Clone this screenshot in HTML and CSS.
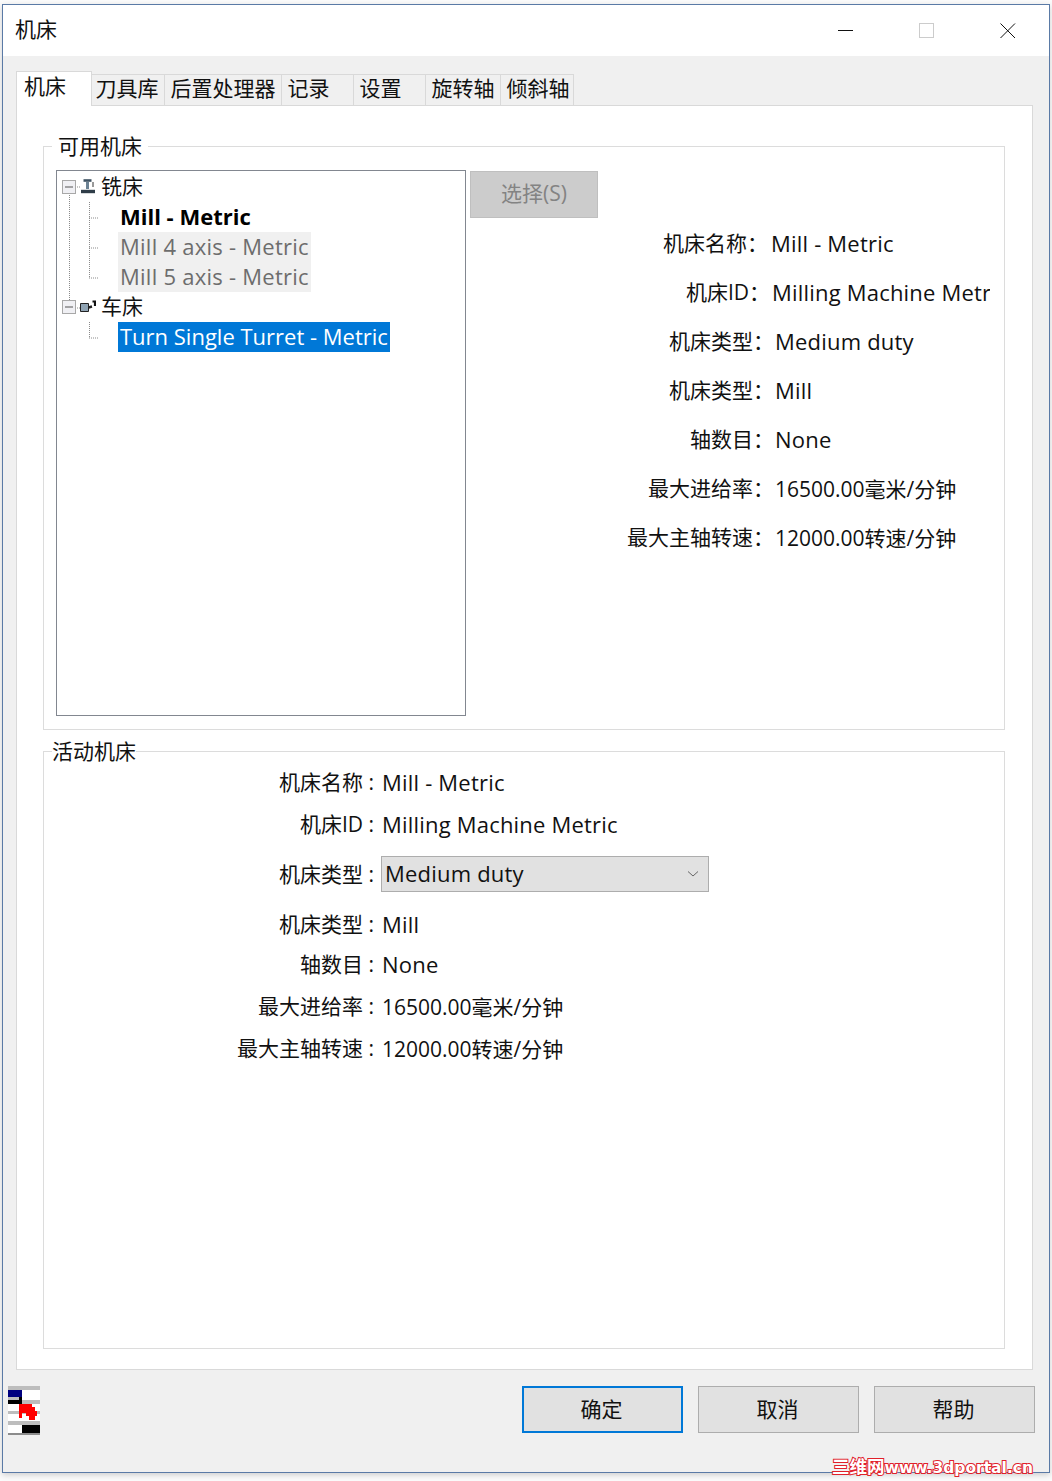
FILE: index.html
```html
<!DOCTYPE html>
<html lang="zh-CN">
<head>
<meta charset="utf-8">
<title>机床</title>
<link rel="stylesheet" href="styles.css">
</head>
<body>
<div class="window">
  <header class="titlebar">
    <span class="title">机床</span>
    <div class="caption">
      <svg class="cap-icon" width="16" height="16" viewBox="0 0 16 16"><path d="M0 7.5H15" stroke="#111" fill="none"/></svg>
      <svg class="cap-icon" width="16" height="16" viewBox="0 0 16 16"><rect x="0.5" y="0.5" width="14" height="14" stroke="#ccc" fill="none"/></svg>
      <svg class="cap-icon" width="16" height="16" viewBox="0 0 16 16"><path d="M0.5 0.5L15 15M15 0.5L0.5 15" stroke="#111" fill="none"/></svg>
    </div>
  </header>
  <div class="client">
    <nav class="tabs">
      <span class="tab tab-active w76">机床</span>
      <span class="tab tab-tight w73">刀具库</span>
      <span class="tab w117">后置处理器</span>
      <span class="tab w72">记录</span>
      <span class="tab w72">设置</span>
      <span class="tab w75">旋转轴</span>
      <span class="tab w73">倾斜轴</span>
    </nav>
    <main class="panel">
      <section class="group group-available">
        <h2 class="legend legend-available">可用机床</h2>
        <div class="tree">
          <svg class="tree-lines" width="120" height="180" viewBox="0 0 120 180">
            <g stroke="#8a8a8a" stroke-dasharray="1 1" fill="none">
              <path d="M12.5 24V129"/>
              <path d="M32.5 31V107M32 47H42M32 77H42M32 107H42"/>
              <path d="M32.5 151V167M32 167H42"/>
              <path d="M18 16H23M18 137H23"/>
            </g>
          </svg>
          <div class="tree-row">
            <svg class="expander" width="15" height="15" viewBox="0 0 15 15"><rect x="0.5" y="0.5" width="13" height="13" fill="#f0f0f4" stroke="#a8a8a8"/><path d="M3 7H11" stroke="#555"/></svg>
            <svg class="node-icon" width="16" height="16" viewBox="0 0 16 16"><path d="M3.5 1.5H11.5" stroke="#3f5363" stroke-width="2.6" fill="none"/><path d="M7.5 3V10" stroke="#6b8294" stroke-width="3" fill="none"/><path d="M13 3V8" stroke="#333" fill="none"/><path d="M1 12.5H15" stroke="#2f3d48" stroke-width="3.4"/></svg>
            <span class="node-label">铣床</span>
          </div>
          <div class="tree-row tree-leaf"><span class="leaf leaf-active">Mill - Metric</span></div>
          <div class="tree-row tree-leaf"><span class="leaf leaf-disabled">Mill 4 axis - Metric</span></div>
          <div class="tree-row tree-leaf"><span class="leaf leaf-disabled">Mill 5 axis - Metric</span></div>
          <div class="tree-row">
            <svg class="expander" width="15" height="15" viewBox="0 0 15 15"><rect x="0.5" y="0.5" width="13" height="13" fill="#f0f0f4" stroke="#a8a8a8"/><path d="M3 7H11" stroke="#555"/></svg>
            <svg class="node-icon" width="16" height="16" viewBox="0 0 16 16"><path d="M0.5 4.5H8.5V12.5H0.5Z" fill="#8fa3b3" stroke="#222"/><path d="M8.5 8.5L12 7.5" stroke="#222" stroke-width="2.4"/><path d="M12.5 2.5H15V7" stroke="#111" stroke-width="2.2" fill="none"/></svg>
            <span class="node-label">车床</span>
          </div>
          <div class="tree-row tree-leaf"><span class="leaf leaf-selected">Turn Single Turret - Metric</span></div>
        </div>
        <div class="side">
          <button class="select-btn" type="button" disabled>选择(S)</button>
          <dl class="info">
            <div class="info-row"><dt>机床名称：</dt><dd class="latin">Mill - Metric</dd></div>
            <div class="info-row info-id"><dt>机床ID：</dt><dd class="latin">Milling Machine Metric</dd></div>
            <div class="info-row info-shift"><dt>机床类型：</dt><dd class="latin">Medium duty</dd></div>
            <div class="info-row info-shift"><dt>机床类型：</dt><dd class="latin">Mill</dd></div>
            <div class="info-row info-shift"><dt>轴数目：</dt><dd class="latin">None</dd></div>
            <div class="info-row info-shift"><dt>最大进给率：</dt><dd>16500.00毫米/分钟</dd></div>
            <div class="info-row info-shift"><dt>最大主轴转速：</dt><dd>12000.00转速/分钟</dd></div>
          </dl>
        </div>
      </section>
      <section class="group group-active">
        <h2 class="legend legend-active">活动机床</h2>
        <dl class="details">
          <div class="detail"><dt>机床名称 :</dt><dd class="latin">Mill - Metric</dd></div>
          <div class="detail gap-12"><dt>机床ID :</dt><dd class="latin">Milling Machine Metric</dd></div>
          <div class="detail gap-20"><dt>机床类型 :</dt><dd class="latin"><div class="combo"><span class="combo-text">Medium duty</span><svg width="12" height="8" viewBox="0 0 12 8"><path d="M1 1.5L6 6L11 1.5" stroke="#666" fill="none"/></svg></div></dd></div>
          <div class="detail gap-20"><dt>机床类型 :</dt><dd class="latin">Mill</dd></div>
          <div class="detail gap-10"><dt>轴数目 :</dt><dd class="latin">None</dd></div>
          <div class="detail gap-12"><dt>最大进给率 :</dt><dd>16500.00毫米/分钟</dd></div>
          <div class="detail gap-12"><dt>最大主轴转速 :</dt><dd>12000.00转速/分钟</dd></div>
        </dl>
      </section>
    </main>
    <footer class="footer">
      <svg class="app-icon" width="32" height="49" viewBox="0 0 32 49" shape-rendering="crispEdges">
        <rect width="32" height="49" fill="#fff"/>
        <rect width="32" height="4" fill="#bdbdbd"/>
        <rect y="14" width="32" height="4" fill="#bdbdbd"/>
        <rect y="25" width="32" height="3" fill="#bdbdbd"/>
        <rect y="35" width="32" height="4" fill="#bdbdbd"/>
        <rect y="47" width="32" height="2" fill="#8c8c8c"/>
        <rect y="4" width="14" height="7" fill="#00007f"/>
        <rect y="11" width="11" height="3" fill="#bdbdbd"/>
        <rect x="11" y="11" width="3" height="7" fill="#000"/>
        <rect y="14" width="14" height="4" fill="#000"/>
        <rect x="14" y="39" width="18" height="8" fill="#000"/>
        <path d="M11 18H24V21H27V25H29V30H27V34H21V30H18V27H14V32H11Z" fill="#f00"/>
      </svg>
      <div class="actions">
        <button class="btn btn-default" type="button">确定</button>
        <button class="btn" type="button">取消</button>
        <button class="btn" type="button">帮助</button>
      </div>
    </footer>
    <div class="watermark"><span class="wm-cjk">三维网</span>www.3dportal.cn</div>
  </div>
</div>
</body>
</html>
```
FILE: styles.css
```css
* { box-sizing: border-box; }
html, body { margin: 0; height: 100%; }
body {
  background: #fbfbfb;
  padding: 4px 2px 8px;
  font-family: "Open Sans", "Noto Sans CJK SC", sans-serif;
  font-size: 21px;
  color: #111;
  overflow: hidden;
}
.window {
  position: relative;
  width: 1048px;
  height: 1469px;
  border: 1px solid #5a7aa6;
  background: #f0f0f0;
  display: flex;
  flex-direction: column;
  box-shadow: 0 2px 6px rgba(0,0,0,.18);
}
.titlebar {
  height: 51px;
  flex: none;
  background: #fff;
  display: flex;
  align-items: center;
  justify-content: space-between;
  padding-left: 12px;
}
.title { line-height: 50px; padding-bottom: 3px; }
.caption { display: flex; gap: 65px; padding-right: 33px; }
.cap-icon { display: block; }
.client { flex: 1; display: flex; flex-direction: column; padding: 14px 16px 0 13px; }
.tabs { display: flex; height: 35px; align-items: flex-end; position: relative; z-index: 1; }
.tab {
  height: 31px;
  background: #f0f0f0;
  border: 1px solid #d9d9d9;
  border-left: 0;
  border-bottom: 0;
  line-height: 27px;
  padding-left: 5.5px;
  white-space: nowrap;
}
.tab-active { height: 35px; background: #fff; border-left: 1px solid #d9d9d9; padding-left: 7px; line-height: 29px; margin-bottom: -1px; }
.tab-tight { padding-left: 3.5px; }
.w76 { width: 76px; } .w75 { width: 75px; } .w117 { width: 117px; } .w72 { width: 72px; } .w73 { width: 73px; }
.panel {
  height: 1265px;
  flex: none;
  background: #fff;
  border: 1px solid #d9d9d9;
  padding: 40px 26px 0;
  display: flex;
  flex-direction: column;
  gap: 21px;
}
.group { position: relative; border: 1px solid #dcdcdc; width: 962px; }
.group-available { height: 584px; display: flex; gap: 4px; padding: 23px 0 0 12px; }
.group-active { height: 598px; padding-top: 15px; }
.legend { position: absolute; margin: 0; font: inherit; background: #fff; line-height: 28px; }
.legend-available { left: 8px; top: -15px; padding: 0 6px; }
.legend-active { left: 8px; top: -15px; }
.tree {
  position: relative;
  width: 410px;
  height: 546px;
  border: 1px solid #828790;
  padding-top: 1px;
  flex: none;
}
.tree-lines { position: absolute; left: 0; top: 0; }
.tree-row { position: relative; height: 30px; display: flex; align-items: center; padding-left: 5px; white-space: nowrap; }
.expander { flex: none; }
.node-icon { flex: none; margin-left: 3px; }
.node-label { margin-left: 5px; padding-bottom: 4px; }
.tree-leaf { padding-left: 61px; font-size: 22px; letter-spacing: .25px; }
.leaf { display: block; height: 30px; line-height: 29px; padding: 0 2px; }
.leaf-active { font-weight: 700; color: #000; letter-spacing: 0; }
.leaf-disabled { background: #f0f0f0; color: #6d6d6d; }
.leaf-selected { background: #0078d7; color: #fff; letter-spacing: 0; }
.side { flex: 1; min-width: 0; padding-top: 1px; }
.select-btn {
  display: block;
  width: 128px;
  height: 47px;
  background: #ccc;
  border: 1px solid #bfbfbf;
  color: #838383;
  font: inherit;
  padding: 0 0 5px;
}
dl { margin: 0; }
dd { margin: 0; }
.latin { font-size: 22px; letter-spacing: .2px; }
.info { width: 520px; display: flex; flex-direction: column; }
.info-row { height: 49px; display: flex; align-items: center; white-space: nowrap; }
.info-row dt { width: 298px; flex: none; text-align: right; padding-bottom: 2px; }
.info-row dd { margin-left: 3px; overflow: hidden; flex: 1; }
.info-row.info-id dt { width: 300px; }
.info-row.info-id dd { margin-left: 2px; }
.info-row.info-shift dt { width: 304px; }
.info-row.info-shift dd { margin-left: 1px; }
.details { display: flex; flex-direction: column; }
.detail { height: 30px; display: flex; align-items: center; white-space: nowrap; }
.detail dt { width: 330px; flex: none; text-align: right; padding-bottom: 2px; }
.detail dd { margin-left: 8px; }
.gap-10 { margin-top: 10px; } .gap-12 { margin-top: 12px; } .gap-20 { margin-top: 20px; }
.combo {
  width: 328px;
  height: 36px;
  margin-left: -1px;
  background: #e1e1e1;
  border: 1px solid #adadad;
  display: flex;
  align-items: center;
  justify-content: space-between;
  padding: 0 9px 0 3px;
}
.combo-text { padding-bottom: 2px; }
.footer { flex: 1; display: flex; align-items: flex-start; justify-content: space-between; padding: 16px 0 0; margin-left: -8px; margin-right: -2px; }
.app-icon { display: block; }
.actions { display: flex; gap: 15px; }
.btn {
  width: 161px;
  height: 47px;
  background: #e1e1e1;
  border: 1px solid #adadad;
  font: inherit;
  color: #111;
  padding: 0 2px 3px 0;
}
.btn-default { border: 2px solid #0078d7; }
.watermark {
  position: absolute;
  right: 16px;
  bottom: -4px;
  font: 700 15.5px/16px "DejaVu Sans", "Noto Sans CJK SC", sans-serif;
  color: #fff;
  -webkit-text-stroke: 2px #e0202a;
  paint-order: stroke fill;
  white-space: nowrap;
}
.wm-cjk { font-size: 17.5px; }
```
